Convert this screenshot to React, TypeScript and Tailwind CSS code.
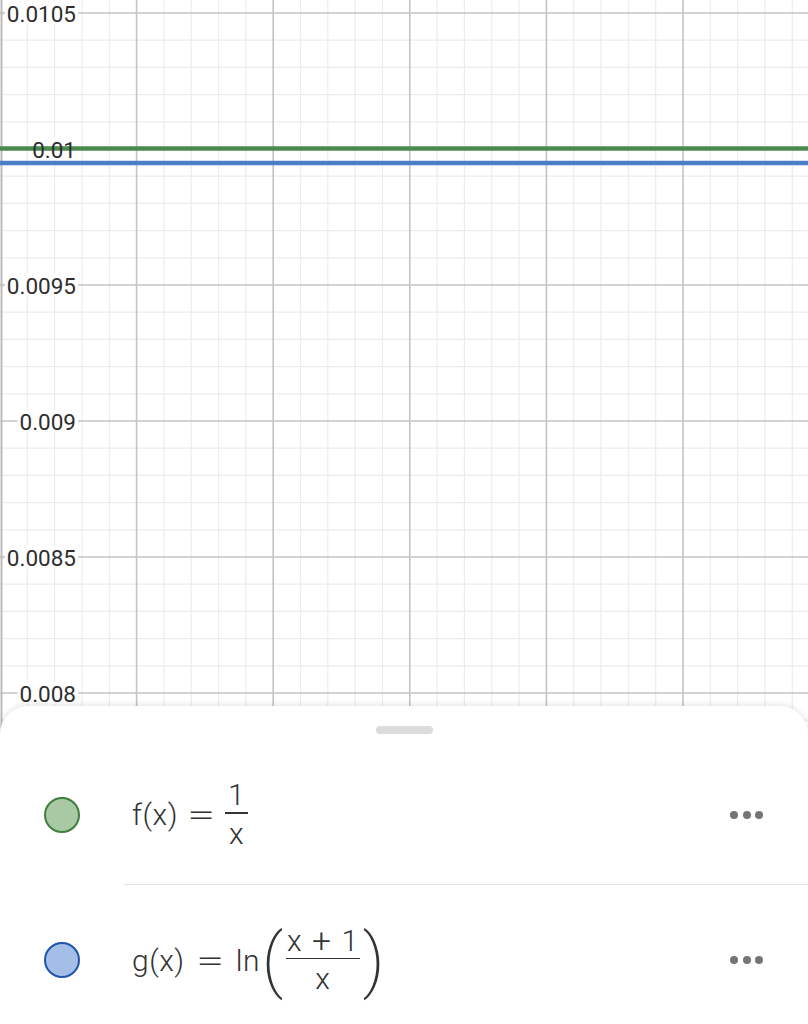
import React from "react";

const W = 808;
const H = 740;
const MX = 136.6;
const MY = 136;
const Y0 = 13;

const labels = [
  { t: "0.0105", y: Y0 },
  { t: "0.01", y: Y0 + MY },
  { t: "0.0095", y: Y0 + MY * 2 },
  { t: "0.009", y: Y0 + MY * 3 },
  { t: "0.0085", y: Y0 + MY * 4 },
  { t: "0.008", y: Y0 + MY * 5 },
];

function labelWidth(t: string) {
  let w = 0;
  for (const c of t) w += c === "." ? 5.9 : 12.6;
  return w;
}

function Graph() {
  const minorV: number[] = [];
  for (let k = 1; k <= 30; k++) if (k % 5 !== 0) minorV.push((MX / 5) * k);
  const minorH: number[] = [];
  for (let k = -1; k <= 27; k++) if (k % 5 !== 0) minorH.push(Y0 + (MY / 5) * k);
  const majorV = [1, 2, 3, 4, 5].map((k) => MX * k);
  const majorH = [0, 1, 2, 3, 4, 5].map((k) => Y0 + MY * k);
  return (
    <svg width={W} height={H} className="block shrink-0">
      <rect x={0} y={0} width={W} height={H} fill="#ffffff" />
      {minorV.map((x) => (
        <line key={"mv" + x} x1={x} x2={x} y1={0} y2={H} stroke="#ececec" strokeWidth={1.2} />
      ))}
      {minorH.map((y) => (
        <line key={"mh" + y} x1={0} x2={W} y1={y} y2={y} stroke="#ececec" strokeWidth={1.2} />
      ))}
      {majorV.map((x) => (
        <line key={"V" + x} x1={x} x2={x} y1={0} y2={H} stroke="#c4c4c4" strokeWidth={1.6} />
      ))}
      {majorH.map((y) => (
        <line key={"H" + y} x1={0} x2={W} y1={y} y2={y} stroke="#c4c4c4" strokeWidth={1.6} />
      ))}
      <line x1={1.5} x2={1.5} y1={0} y2={H} stroke="#bcbcbc" strokeWidth={2} />
      {labels.map((l) => {
        const w = labelWidth(l.t);
        return <rect key={"b" + l.t} x={76 - w - 2} y={l.y - 11} width={w + 4} height={22} fill="#ffffff" />;
      })}
      <line x1={0} x2={W} y1={148.5} y2={148.5} stroke="#4b8a4f" strokeWidth={4.5} />
      <line x1={0} x2={W} y1={163} y2={163} stroke="#4a7fc8" strokeWidth={4.5} />
      {labels.map((l) => (
        <text
          key={"t" + l.t}
          x={76}
          y={l.y + 1}
          textAnchor="end"
          dominantBaseline="central"
          fontFamily="Roboto, sans-serif"
          fontSize={22.5}
          fill="#2e2e2e"
        >
          {l.t}
        </text>
      ))}
    </svg>
  );
}

function Dots() {
  return (
    <div className="flex items-center gap-[4.5px]">
      <span className="w-2 h-2 rounded-full bg-[#757575]" />
      <span className="w-2 h-2 rounded-full bg-[#757575]" />
      <span className="w-2 h-2 rounded-full bg-[#757575]" />
    </div>
  );
}

function Frac({ num, den, pad }: { num: React.ReactNode; den: React.ReactNode; pad?: string }) {
  return (
    <span className="inline-flex flex-col items-center">
      <span className={"leading-[28px] pb-[3px] flex items-center " + (pad ?? "px-[3px]")}>{num}</span>
      <span className="h-[1.5px] w-full bg-[#333333]" />
      <span className="leading-[28px] pt-[6px] px-[3px] flex items-center">{den}</span>
    </span>
  );
}

export default function App() {
  return (
    <div className="w-[808px] h-[1024px] overflow-hidden bg-white flex flex-col font-['Roboto',sans-serif]">
      <Graph />
      <div className="relative -mt-[34px] flex-1 bg-white rounded-t-[28px] shadow-[0_-1px_6px_rgba(0,0,0,0.12)] flex flex-col">
        <div className="pt-[20px] flex justify-center">
          <div className="w-[57px] h-2 rounded-full bg-[#dcdcdc]" />
        </div>
        <div className="mt-[11px] h-[139px] flex items-center pl-[44px] pr-[45px]">
          <div className="w-9 h-9 rounded-full bg-[#a8c9a3] border-2 border-[#3e7e3e] shrink-0" />
          <div className="ml-[52px] flex-1 flex items-center text-[30px] font-light text-[#333333] tracking-[0.5px]">
            <span>f(x)</span>
            <span className="inline-block mx-[15px] scale-x-[1.7]">=</span>
            <Frac num="1" den="x" />
          </div>
          <Dots />
        </div>
        <div className="h-px bg-[#e3e3e3] ml-[124px]" />
        <div className="h-[150px] flex items-center pl-[44px] pr-[45px]">
          <div className="w-9 h-9 rounded-full bg-[#a3bfe7] border-2 border-[#1f55a8] shrink-0" />
          <div className="ml-[52px] flex-1 flex items-center text-[30px] font-light text-[#333333] tracking-[0.5px]">
            <span>g(x)</span>
            <span className="inline-block mx-[17px] scale-x-[1.7]">=</span>
            <span>ln</span>
            <span className="inline-block ml-[6px] mr-[6px] text-[44px] font-extralight leading-none scale-y-[1.62] scale-x-[1.6]">(</span>
            <Frac
              pad="px-[1px]"
              num={
                <>
                  <span>x</span>
                  <span className="inline-block mx-[11px] scale-[1.12]">+</span>
                  <span>1</span>
                </>
              }
              den="x"
            />
            <span className="inline-block ml-[7px] text-[44px] font-extralight leading-none scale-y-[1.62] scale-x-[1.6]">)</span>
          </div>
          <Dots />
        </div>
      </div>
    </div>
  );
}
